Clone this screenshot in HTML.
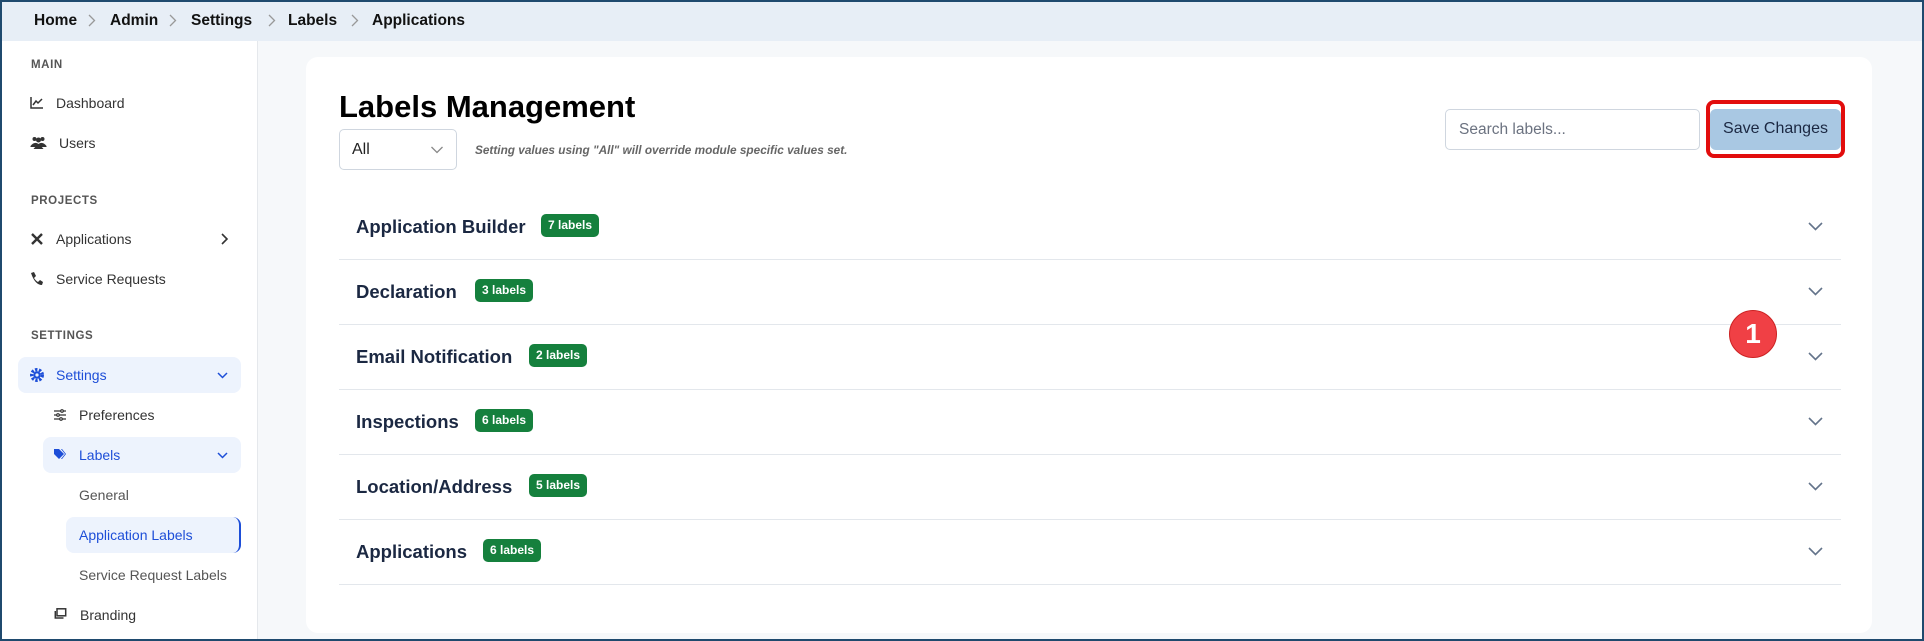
<!DOCTYPE html>
<html><head><meta charset="utf-8"><style>
*{box-sizing:border-box;margin:0;padding:0}
body{width:1924px;height:641px;overflow:hidden;font-family:"Liberation Sans",sans-serif;background:#f6f8fa;position:relative;color:#1e2a44}
.frame{position:absolute;inset:0;border:2px solid #1f4a6e;pointer-events:none;z-index:10}
.top{position:absolute;left:0;top:0;width:1924px;height:41px;background:#e7eef6;font-size:15.5px;font-weight:bold;color:#111}
.top span{position:absolute;top:12px}
.top svg{position:absolute;top:14px}
.side{position:absolute;left:0;top:41px;width:258px;height:600px;background:#fff;border-right:1px solid #e5e8ec}
.s{position:absolute;font-size:14px;color:#333;white-space:nowrap}
.h{position:absolute;font-size:11.5px;color:#555;letter-spacing:.6px;font-weight:bold}
.box{position:absolute;background:#edf3fd;border-radius:8px}
.card{position:absolute;left:306px;top:57px;width:1566px;height:576px;background:#fff;border-radius:12px}
.row{position:absolute;left:339px;width:1502px;height:65px;border-bottom:1px solid #e3e7ec}
.row b{position:absolute;left:17px;top:21px;font-size:18.5px;color:#1b2842;white-space:nowrap}
.badge{position:absolute;top:19px;height:23px;background:#15803d;color:#fff;font-size:12px;font-weight:bold;border-radius:5px;padding:5px 7px;line-height:13px;white-space:nowrap}
.chev{position:absolute;right:18px;top:27px}
</style></head><body>
<div class="top">
<span style="left:34px">Home</span><svg style="left:88px" width="8" height="13" viewBox="0 0 8 13" fill="none" stroke="#999" stroke-width="1.3"><path d="M1 1L6.5 6.5L1 12"/></svg>
<span style="left:110px">Admin</span><svg style="left:169px" width="8" height="13" viewBox="0 0 8 13" fill="none" stroke="#999" stroke-width="1.3"><path d="M1 1L6.5 6.5L1 12"/></svg>
<span style="left:191px">Settings</span><svg style="left:268px" width="8" height="13" viewBox="0 0 8 13" fill="none" stroke="#999" stroke-width="1.3"><path d="M1 1L6.5 6.5L1 12"/></svg>
<span style="left:288px">Labels</span><svg style="left:351px" width="8" height="13" viewBox="0 0 8 13" fill="none" stroke="#999" stroke-width="1.3"><path d="M1 1L6.5 6.5L1 12"/></svg>
<span style="left:372px">Applications</span>
</div>
<div class="side"></div>
<div class="h" style="left:31px;top:59px">MAIN</div>
<svg style="position:absolute;left:30px;top:96px" width="14" height="13" viewBox="0 0 14 13" fill="none" stroke="#333" stroke-width="1.5"><path d="M1 1V12H13M3 9L6 5L8 7L12 3"/></svg>
<div class="s" style="left:56px;top:95px">Dashboard</div>
<svg style="position:absolute;left:30px;top:136px" width="17" height="13" viewBox="0 0 16 13" fill="#333"><circle cx="4" cy="3" r="2"/><circle cx="12" cy="3" r="2"/><circle cx="8" cy="4" r="2.5"/><path d="M0 10Q4 5 8 8Q12 5 16 10V11H0Z"/><path d="M3 13Q8 6 13 13Z"/></svg>
<div class="s" style="left:59px;top:135px">Users</div>
<div class="h" style="left:31px;top:195px">PROJECTS</div>
<svg style="position:absolute;left:30px;top:232px" width="14" height="14" viewBox="0 0 14 14" fill="none" stroke="#333" stroke-width="2.4"><path d="M2 2L12 12M12 2L2 12"/></svg>
<div class="s" style="left:56px;top:231px">Applications</div>
<svg style="position:absolute;left:221px;top:233px" width="8" height="12" viewBox="0 0 8 12" fill="none" stroke="#333" stroke-width="1.6"><path d="M1 1L6 6L1 11"/></svg>
<svg style="position:absolute;left:30px;top:272px" width="13" height="14" viewBox="0 0 13 14" fill="#333"><path d="M1 1L4 0L6 4L4 6Q6 9 8 10L10 8L13 10L12 13Q5 13 1 1Z"/></svg>
<div class="s" style="left:56px;top:271px">Service Requests</div>
<div class="h" style="left:31px;top:330px">SETTINGS</div>
<div class="box" style="left:18px;top:357px;width:223px;height:36px"></div>
<svg style="position:absolute;left:30px;top:368px" width="14" height="14" viewBox="0 0 13 13"><circle cx="6.5" cy="6.5" r="5" fill="none" stroke="#1d4ed8" stroke-width="3" stroke-dasharray="2.2 1.4"/><circle cx="6.5" cy="6.5" r="3.5" fill="#1d4ed8"/><circle cx="6.5" cy="6.5" r="1.5" fill="#edf3fd"/></svg>
<div class="s" style="left:56px;top:367px;color:#1d4ed8">Settings</div>
<svg style="position:absolute;left:217px;top:372px" width="11" height="7" viewBox="0 0 11 7" fill="none" stroke="#1d4ed8" stroke-width="1.5"><path d="M1 1L5.5 5.5L10 1"/></svg>
<svg style="position:absolute;left:54px;top:409px" width="12" height="12" viewBox="0 0 12 12" fill="none" stroke="#333" stroke-width="1.2"><path d="M0 2H12M0 6H12M0 10H12"/><circle cx="8" cy="2" r="1.3" fill="#fff"/><circle cx="4" cy="6" r="1.3" fill="#fff"/><circle cx="7" cy="10" r="1.3" fill="#fff"/></svg>
<div class="s" style="left:79px;top:407px">Preferences</div>
<div class="box" style="left:43px;top:437px;width:198px;height:36px"></div>
<svg style="position:absolute;left:54px;top:449px" width="12" height="11" viewBox="0 0 12 11" fill="#1d4ed8"><path d="M0 0H5L10 5L5 10L0 5Z"/><path d="M7 0H8L12 5L8 10H7L11 5Z"/></svg>
<div class="s" style="left:79px;top:447px;color:#1d4ed8">Labels</div>
<svg style="position:absolute;left:217px;top:452px" width="11" height="7" viewBox="0 0 11 7" fill="none" stroke="#1d4ed8" stroke-width="1.5"><path d="M1 1L5.5 5.5L10 1"/></svg>
<div class="s" style="left:79px;top:487px;color:#555">General</div>
<div class="box" style="left:66px;top:517px;width:175px;height:36px;border-right:2px solid #1d4ed8"></div>
<div class="s" style="left:79px;top:527px;color:#1d4ed8">Application Labels</div>
<div class="s" style="left:79px;top:567px;color:#555">Service Request Labels</div>
<svg style="position:absolute;left:54px;top:608px" width="13" height="11" viewBox="0 0 12 11" fill="none" stroke="#333" stroke-width="1.5"><rect x="2.5" y="0.8" width="8.7" height="7"/><path d="M0.8 3V10H9"/></svg>
<div class="s" style="left:80px;top:607px;color:#333">Branding</div>

<div class="card"></div>
<div style="position:absolute;left:339px;top:89px;font-size:31px;font-weight:bold;color:#000">Labels Management</div>
<div style="position:absolute;left:339px;top:129px;width:118px;height:41px;border:1px solid #cfd6df;border-radius:5px;font-size:16px;color:#222;padding:11px 12px">All
<svg style="position:absolute;left:90px;top:16px" width="14" height="8" viewBox="0 0 13 8" fill="none" stroke="#888" stroke-width="1.3"><path d="M1 1L6.5 6.5L12 1"/></svg></div>
<div style="position:absolute;left:475px;top:143px;font-size:11.8px;font-style:italic;font-weight:bold;color:#666">Setting values using "All" will override module specific values set.</div>
<div style="position:absolute;left:1445px;top:109px;width:255px;height:41px;border:1px solid #cfd6df;border-radius:5px;font-size:15.5px;color:#6b7280;padding:11px 13px">Search labels...</div>
<div style="position:absolute;left:1706px;top:100px;width:139px;height:58px;border:4px solid #e20d0d;border-radius:8px"></div>
<div style="position:absolute;left:1710px;top:109px;width:131px;height:41px;background:#a9c8e3;border-radius:6px;font-size:16px;color:#1b2842;padding:11px 0;text-align:center">Save Changes</div>

<div class="row" style="top:195px"><b>Application Builder</b><span class="badge" style="left:202px">7 labels</span><svg class="chev" width="15" height="9" viewBox="0 0 15 9" fill="none" stroke="#64748b" stroke-width="1.6"><path d="M1 1L7.5 7.5L14 1"/></svg></div>
<div class="row" style="top:260px"><b>Declaration</b><span class="badge" style="left:136px">3 labels</span><svg class="chev" width="15" height="9" viewBox="0 0 15 9" fill="none" stroke="#64748b" stroke-width="1.6"><path d="M1 1L7.5 7.5L14 1"/></svg></div>
<div class="row" style="top:325px"><b>Email Notification</b><span class="badge" style="left:190px">2 labels</span><svg class="chev" width="15" height="9" viewBox="0 0 15 9" fill="none" stroke="#64748b" stroke-width="1.6"><path d="M1 1L7.5 7.5L14 1"/></svg></div>
<div class="row" style="top:390px"><b>Inspections</b><span class="badge" style="left:136px">6 labels</span><svg class="chev" width="15" height="9" viewBox="0 0 15 9" fill="none" stroke="#64748b" stroke-width="1.6"><path d="M1 1L7.5 7.5L14 1"/></svg></div>
<div class="row" style="top:455px"><b>Location/Address</b><span class="badge" style="left:190px">5 labels</span><svg class="chev" width="15" height="9" viewBox="0 0 15 9" fill="none" stroke="#64748b" stroke-width="1.6"><path d="M1 1L7.5 7.5L14 1"/></svg></div>
<div class="row" style="top:520px"><b>Applications</b><span class="badge" style="left:144px">6 labels</span><svg class="chev" width="15" height="9" viewBox="0 0 15 9" fill="none" stroke="#64748b" stroke-width="1.6"><path d="M1 1L7.5 7.5L14 1"/></svg></div>

<div style="position:absolute;left:1729px;top:310px;width:48px;height:48px;border-radius:50%;background:#f04045;border:1px solid #c22;color:#fff;font-size:28px;font-weight:bold;text-align:center;line-height:46px">1</div>
<div class="frame"></div>
</body></html>
